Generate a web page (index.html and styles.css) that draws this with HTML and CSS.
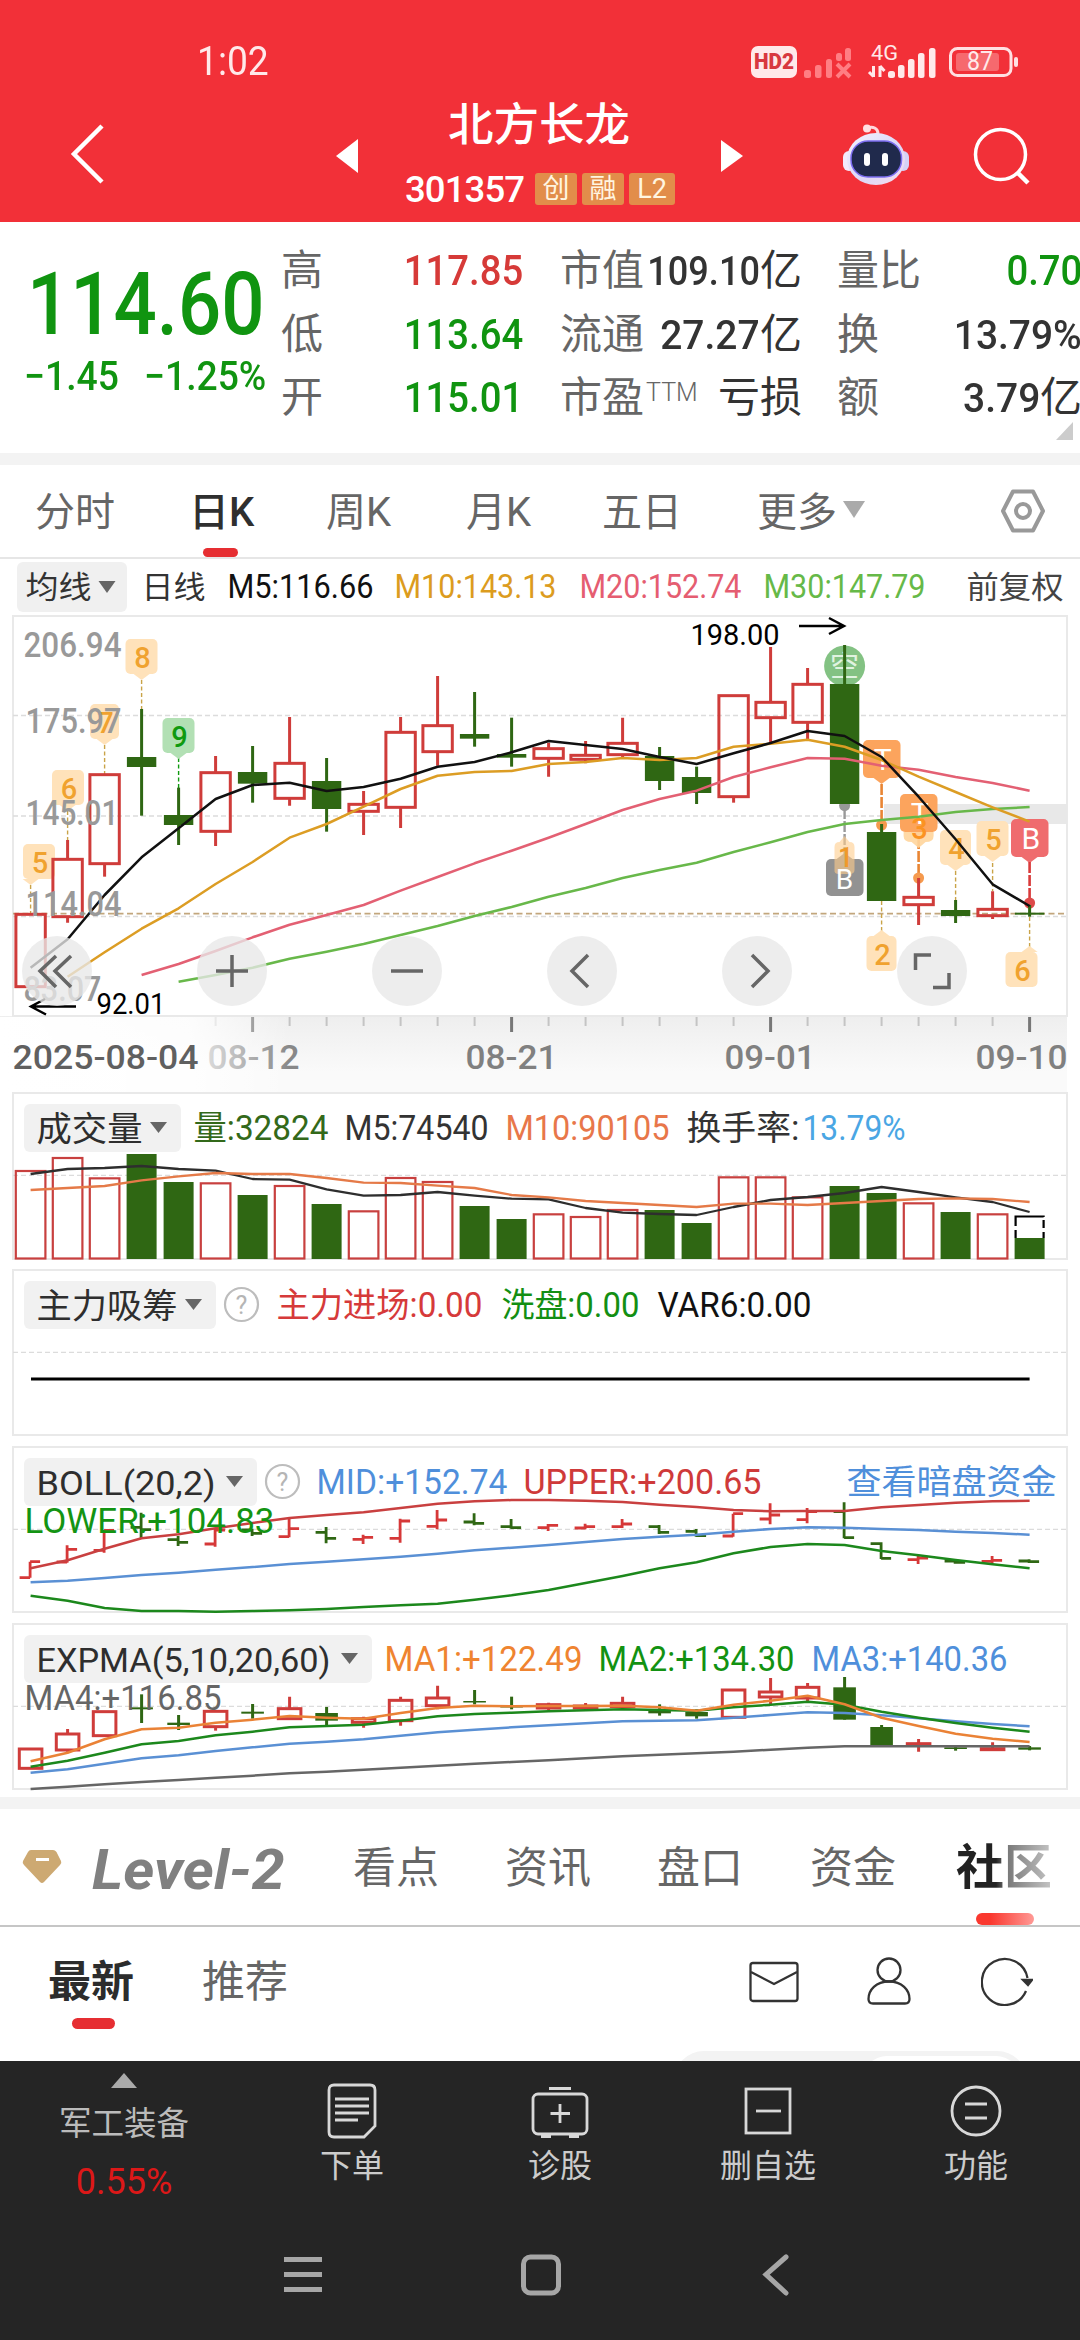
FILE: index.html
```html
<!DOCTYPE html>
<html lang="zh-CN">
<head>
<meta charset="utf-8">
<title>北方长龙 301357</title>
<link rel="stylesheet" href="styles.css">
</head>
<body>
<header class="top">
  <div class="status">
    <span class="clock">1:02</span>
    <svg class="status-icons" width="270" height="44" viewBox="0 -8 270 44">
      <rect x="0" y="2" width="46" height="32" rx="7" fill="#ffe9ea"/>
      <text x="3" y="25" class="hd" textLength="40" lengthAdjust="spacingAndGlyphs">HD2</text>
      <g fill="#ff7e83">
        <rect x="53" y="26" width="7" height="8" rx="2.5"/><rect x="64" y="21" width="6.500" height="13" rx="2.500"/>
        <rect x="75" y="15" width="6" height="19" rx="2.500"/><rect x="85" y="9" width="6" height="8" rx="2.500"/><rect x="94" y="4" width="6" height="13" rx="2.500"/>
      </g>
      <path d="M86 20 99 33M99 20 86 33" stroke="#ff7e83" stroke-width="4"/>
      <text x="120" y="16" class="net" textLength="27" lengthAdjust="spacingAndGlyphs">4G</text>
      <path d="M122.500 22v11M118 28l4.500 4.500M129 33V22M133.500 27 129 22" fill="none" stroke="#ffe9ea" stroke-width="3"/>
      <g fill="#ffe9ea">
        <rect x="137" y="27" width="7" height="7" rx="2.500"/><rect x="147" y="21" width="6.500" height="13" rx="2.500"/><rect x="157" y="15" width="6.500" height="19" rx="2.500"/>
        <rect x="167" y="9" width="6.500" height="25" rx="2.500"/><rect x="178" y="4" width="6.500" height="30" rx="2.500"/>
      </g>
      <rect x="199.500" y="4.500" width="60.500" height="27" rx="7" fill="none" stroke="#ffe0e2" stroke-width="3"/>
      <rect x="205" y="9" width="43" height="18" rx="3" fill="#f6696e"/>
      <rect x="263" y="13" width="4" height="10" rx="2" fill="#ffe0e2"/>
      <text x="216" y="26" class="bat" textLength="26" lengthAdjust="spacingAndGlyphs">87</text>
    </svg>
  </div>
  <div class="titlebar">
    <svg class="back" width="40" height="66" viewBox="0 0 40 66"><path d="M34 5 6 33 34 61" fill="none" stroke="#fff" stroke-width="4.500"/></svg>
    <svg class="prev" width="22" height="34" viewBox="0 0 22 34"><path d="M22 0v34L0 17z" fill="#fff"/></svg>
    <div class="stock">
      <h1>北方长龙</h1>
      <div class="code"><span>301357</span><i>创</i><i>融</i><i class="l2">L2</i></div>
    </div>
    <svg class="next" width="22" height="34" viewBox="0 0 22 34"><path d="M0 1v32l22-16z" fill="#fff"/></svg>
    <svg class="robot" width="68" height="64" viewBox="0 0 68 64">
      <defs>
        <linearGradient id="shell" x1="0" y1="0" x2="1" y2="1"><stop offset="0" stop-color="#f4f3ff"/><stop offset=".55" stop-color="#dcd8f8"/><stop offset="1" stop-color="#f8dcec"/></linearGradient>
      </defs>
      <path d="M25 5C31 3 36 5 36 11" fill="none" stroke="#ffd7dd" stroke-width="3"/><circle cx="25" cy="5.500" r="4" fill="#ffdfe3"/>
      <rect x="1" y="28" width="12" height="20" rx="6" fill="#f3eafc"/><rect x="55" y="28" width="12" height="20" rx="6" fill="#d5d2f5"/>
      <ellipse cx="34" cy="36" rx="29" ry="26" fill="url(#shell)"/>
      <rect x="9" y="18" width="50.500" height="36" rx="17" fill="#202a4c" stroke="#7c6df0" stroke-width="1.500"/>
      <rect x="22" y="30" width="6" height="13" rx="3" fill="#fff"/><rect x="40" y="30" width="6" height="13" rx="3" fill="#fff"/>
    </svg>
    <svg class="search" width="58" height="58" viewBox="0 0 58 58"><circle cx="27.500" cy="27.500" r="25" fill="none" stroke="#fff" stroke-width="3.500"/><path d="M44 45 55 56" stroke="#fff" stroke-width="4.500"/></svg>
  </div>
</header>

<section class="quote">
  <div class="price green">
    <div class="last"><b>114.60</b></div>
    <div class="chg"><span class="abs">−1.45</span><span class="pct">−1.25%</span></div>
  </div>
  <dl>
    <div><dt>高</dt><dd class="red"><span>117.85</span></dd></div>
    <div><dt>低</dt><dd class="green"><span>113.64</span></dd></div>
    <div><dt>开</dt><dd class="green"><span>115.01</span></dd></div>
  </dl>
  <dl class="mid">
    <div><dt>市值</dt><dd><span class="tight">109.10</span>亿</dd></div>
    <div><dt>流通</dt><dd><span>27.27</span>亿</dd></div>
    <div><dt>市盈<sup>TTM</sup></dt><dd>亏损</dd></div>
  </dl>
  <dl class="end">
    <div><dt>量比</dt><dd class="green"><span>0.70</span></dd></div>
    <div><dt>换</dt><dd><span>13.79%</span></dd></div>
    <div><dt>额</dt><dd><span>3.79</span>亿</dd></div>
  </dl>
  <i class="corner"></i>
</section>

<nav class="periods">
  <span>分时</span><span class="on">日K</span><span>周K</span><span>月K</span><span>五日</span><span class="more">更多<i></i></span>
  <svg width="46" height="44" viewBox="0 0 46 44"><path d="M13 2.500H33L43 22 33 41.500H13L3 22z" fill="none" stroke="#999" stroke-width="4" stroke-linejoin="round"/><circle cx="23" cy="22" r="7" fill="none" stroke="#999" stroke-width="4"/></svg>
</nav>

<section class="charts">
  <div class="kline">
    <svg id="kline" width="1080" height="533" viewBox="0 -41 1080 533"></svg>
    <div class="tools">
      <button><svg viewBox="0 0 70 70"><path d="M34 20 18 35 34 51M49 20 33 35 49 51"/></svg></button>
      <button><svg viewBox="0 0 70 70"><path d="M19 35H51M35 19V51"/></svg></button>
      <button><svg viewBox="0 0 70 70"><path d="M19 35H51"/></svg></button>
      <button><svg viewBox="0 0 70 70"><path d="M41 19 25 35 41 51"/></svg></button>
      <button><svg viewBox="0 0 70 70"><path d="M30 19 46 35 30 51"/></svg></button>
      <button><svg viewBox="0 0 70 70"><path d="M18.500 34V19H34M52 37V51.500H36"/></svg></button>
    </div>
  </div>
  <svg id="volume" width="1080" height="177" viewBox="0 12 1080 177"></svg>
  <svg id="inflow" width="1080" height="177" viewBox="0 189 1080 177"></svg>
  <svg id="boll" width="1080" height="177" viewBox="0 16 1080 177"></svg>
  <svg id="expma" width="1080" height="174" viewBox="0 193 1080 174"></svg>
</section>

<nav class="sections">
  <svg width="40" height="36" viewBox="0 0 40 36"><path d="M9 1H31Q33 1 34.500 3L39 12Q40 14 38 16L22 33Q20 35 18 33L2 16Q0 14 1 12L6 3Q7 1 9 1z" fill="#cda972"/><path d="M14 10.500H27" stroke="#fff" stroke-width="3"/></svg>
  <span class="level"><b>Level-2</b></span>
  <span>看点</span><span>资讯</span><span>盘口</span><span>资金</span><span class="on">社区</span>
</nav>

<section class="feed">
  <span class="on">最新</span><span>推荐</span>
  <svg class="mail" width="50" height="42" viewBox="0 0 50 42"><rect x="1.500" y="2" width="47" height="38" rx="2.500"/><path d="M2 11 25 23 48 11"/></svg>
  <svg class="user" width="46" height="50" viewBox="0 0 46 50"><circle cx="23" cy="14" r="11.500"/><path d="M23 25.500C10 25.500 2.500 34 2.500 43Q2.500 47.500 7 47.500H39Q43.500 47.500 43.500 43C43.500 34 36 25.500 23 25.500z"/></svg>
  <svg class="reload" width="52" height="50" viewBox="0 0 52 50"><path d="M45 35A23 23 0 1 1 46.500 22"/><path d="M42 24h9l-4 5z" fill="#333"/></svg>
  <div class="sorter"><i></i></div>
</section>

<footer>
  <div class="tabbar">
    <div class="index"><i></i><span>军工装备</span><em>0.55%</em></div>
    <div><svg width="60" height="58" viewBox="0 0 60 58"><path d="M12 3H48Q53 3 53 8V44L42 55H12Q7 55 7 50V8Q7 3 12 3z"/><path d="M13 17H47M13 24H47M13 31H47M13 38H36"/></svg><span>下单</span></div>
    <div><svg width="60" height="58" viewBox="0 0 60 58"><rect x="3" y="12" width="54" height="40" rx="5"/><path d="M19 6.500H41M30 22V41M20.500 31.500H40"/><path d="M11 54H21M39 54H49" stroke-width="4"/></svg><span>诊股</span></div>
    <div><svg width="60" height="58" viewBox="0 0 60 58"><rect x="8" y="7" width="44" height="44"/><path d="M18 29H43"/></svg><span>删自选</span></div>
    <div><svg width="60" height="58" viewBox="0 0 60 58"><circle cx="30" cy="29" r="24"/><path d="M19 22H41M19 36H41"/></svg><span>功能</span></div>
  </div>
  <div class="sysnav">
    <svg width="40" height="42" viewBox="0 0 40 42"><path d="M1 5.500H39M1 20.500H39M1 35.500H39" stroke-linecap="butt"/></svg>
    <svg width="40" height="42" viewBox="0 0 40 42"><rect x="2.500" y="3" width="35" height="36" rx="7"/></svg>
    <svg width="40" height="42" viewBox="0 0 40 42"><path d="M28 3 8 20.500 28 39"/></svg>
  </div>
</footer>
<script src="charts.js"></script>
</body>
</html>
```
FILE: styles.css
```css
* { box-sizing: border-box; }
body { margin: 0; width: 1080px; height: 2340px; overflow: hidden; background: #fff; color: #333;
  font-family: Roboto, "Noto Sans CJK SC", sans-serif; }
svg { display: block; flex: none; }
i, em { font-style: normal; }
.red { color: #d63a38; }
.green { color: #109410; }

.top { height: 222px; background: #f23038; color: #fff; }
.status { height: 80px; padding: 36px 59px 0 197px; display: flex; justify-content: space-between; align-items: flex-start; }
.clock { margin-top: 8px; font-size: 40px; line-height: 36px; color: #ffe9ea; transform: scaleX(.93); transform-origin: left; }
.hd { font: 900 22px Roboto; fill: #d8383f; }
.net { font: 400 21px Roboto; fill: #ffe9ea; }
.bat { font: 400 25px Roboto; fill: #ffe9ea; }
.titlebar { height: 142px; padding-left: 68px; display: flex; align-items: flex-start; }
.back { margin-top: 41px; }
.prev { margin: 59px 0 0 228px; }
.stock { width: 340px; margin-left: 22px; padding-left: 25px; }
.stock h1 { margin: 21px 0 0 43px; font-size: 45.500px; line-height: 50px; font-weight: 500; }
.code { display: flex; align-items: center; gap: 5px; margin-top: 20px; height: 36px; }
.code span { width: 125px; font-size: 36.500px; font-weight: 500; letter-spacing: -.9px; }
.code i { width: 42px; height: 32px; border-radius: 3px; background: #e28d4a; color: #fff5e0; font-size: 27px; line-height: 32px; text-align: center; }
.code .l2 { width: 46px; }
.next { margin: 59px 0 0 1px; }
.robot { margin: 43px 0 0 99px; }
.search { margin: 47px 0 0 63px; }

.quote { position: relative; height: 231px; display: grid; grid-template-columns: 281px 242px 240px 242px; column-gap: 0; }
.price { padding-top: 38px; }
.last { height: 86px; padding-left: 27px; }
.last b { display: inline-block; font-size: 87px; line-height: 88px; font-weight: 500; transform: scaleX(.875); transform-origin: left; }
.chg { display: flex; font-size: 40.500px; line-height: 60px; font-weight: 500; }
.chg span { display: block; transform: scaleX(.92); transform-origin: left; }
.abs { width: 120px; margin-left: 24px; }
dl { margin: 0; padding-top: 17px; font-size: 42px; }
dl div { display: flex; justify-content: space-between; height: 63.500px; line-height: 63px; white-space: nowrap; }
dt { color: #666; }
dt sup { font-size: 25px; line-height: 20px; vertical-align: 11px; font-weight: 300; margin-left: 2px; }
dd { margin: 0; font-weight: 500; }
dd span { display: inline-block; font-size: 43px; font-weight: 500; transform: scaleX(.89); transform-origin: right; }
.mid { margin-left: 37px; width: 242px; }
.end { margin-left: 74px; width: 245px; }
.mid dd, .end dd { font-weight: 400; }
.mid dd span, .end dd span { font-size: 41px; transform: scaleX(.95); }
.mid dd .tight { margin-left: -20px; transform: scaleX(.88); }
.end .green span { font-size: 43px; transform: scaleX(.89); }
.corner { position: absolute; right: 7px; bottom: 13px; border: solid transparent; border-width: 0 0 18px 17px; border-bottom-color: #ccc; }

.periods { height: 106px; border-top: 12px solid #f3f3f3; border-bottom: 2px solid #e6e6e6; display: grid;
  grid-template-columns: 154px 137px 140px 136px 155px 243px 46px; padding-left: 35px; align-items: center; color: #666; font-size: 40px; line-height: 95px; }
.periods span { position: relative; height: 92px; }
.periods .on { color: #2f2f2f; font-weight: 500; }
.periods .on::after { content: ""; position: absolute; left: 14px; bottom: 0; width: 35px; height: 9px; border-radius: 5px; background: #e62e32; }
.more i { display: inline-block; vertical-align: 8px; margin-left: 6px; border: solid transparent; border-width: 17px 11px 0; border-top-color: #aaa; }

.kline { position: relative; height: 533px; }
.tools { position: absolute; left: 22px; top: 377px; width: 945px; display: flex; justify-content: space-between; }
.tools button { width: 70px; height: 70px; padding: 0; border: 0; border-radius: 50%; background: rgba(232,232,232,.78); }
.tools path { fill: none; stroke: #666; stroke-width: 3.500; }
#kline, #volume, #inflow, #boll, #expma { font-family: Roboto, "Noto Sans CJK SC", sans-serif; }

.sections { height: 130px; border-top: 12px solid #f3f3f3; border-bottom: 2px solid #c6c6c6; display: grid; padding-left: 22px;
  grid-template-columns: 70px 261px 152px 152px 153px 146px 100px; align-items: center; font-size: 43px; line-height: 119px; color: #666; }
.sections span { height: 116px; }
.level b { display: inline-block; font: italic 700 56px/122px Roboto; color: #808080; transform: scaleX(1.06); transform-origin: left; }
.sections .on { position: relative; font-size: 48px; font-weight: 700; line-height: 117px;
  background: linear-gradient(90deg, #222 40%, #777 50%, #ccc 100%); -webkit-background-clip: text; background-clip: text; color: transparent; }
.sections .on::after { content: ""; position: absolute; left: 20px; bottom: 0; width: 58px; height: 12px; border-radius: 6px; background: linear-gradient(90deg, #fa382f 25%, #ff9a96); }

.feed { position: relative; height: 134px; overflow: hidden; display: flex; padding-left: 48px; font-size: 43px; line-height: 110px; color: #666; }
.feed > span { position: relative; width: 154px; }
.feed .on { color: #2c2c2c; font-weight: 700; }
.feed .on::after { content: ""; position: absolute; left: 24px; top: 91px; width: 43px; height: 11px; border-radius: 6px; background: #e62e32; }
.feed svg { fill: none; stroke: #333; stroke-width: 2.300; }
.mail { margin: 34px 0 0 393px; }
.user { margin: 29px 0 0 67px; }
.reload { margin: 29px 0 0 69px; }
.sorter { position: absolute; left: 674px; top: 124px; width: 353px; height: 60px; border-radius: 30px; background: #f3f3f3; padding: 5px 6px; }
.sorter i { display: block; margin-left: 182px; height: 50px; border-radius: 25px; background: #fff; }

footer { height: 279px; background: #252525; }
.tabbar { height: 150px; display: grid; grid-template-columns: 248px 208px 208px 208px 208px; color: #ccc; font-size: 32px; }
.tabbar div { display: flex; flex-direction: column; align-items: center; padding-top: 21px; line-height: 50px; }
.tabbar div span { margin-top: 1px; }
.tabbar svg { fill: none; stroke: #d8d8d8; stroke-width: 2.800; }
.tabbar .index { padding-top: 12px; color: #bbb; }
.index i { border: solid transparent; border-width: 0 13px 15px; border-bottom-color: #aaa; }
.tabbar .index span { margin-top: 11px; font-size: 32.500px; }
.index em { margin-top: 8px; font-size: 36px; color: #dc1818; }
.sysnav { height: 86px; margin: 43px 0 0 283px; width: 515px; display: flex; justify-content: space-between; }
.sysnav svg { fill: none; stroke: #a6a6a6; stroke-width: 5; stroke-linecap: round; }
```
FILE: charts.js
```js
// Series values are stored in chart units: 3 units to one CSS pixel.
const STEP = 37, X0 = 30.6, X = i => X0 + STEP * i;
const RED = '#cf3c3a', GREEN = '#2f6713';

function el(parent, name, attrs, text) {
  const n = document.createElementNS('http://www.w3.org/2000/svg', name);
  for (const k in attrs) n.setAttribute(k, attrs[k]);
  if (text) n.textContent = text;
  parent.appendChild(n);
  return n;
}
const svg = id => document.getElementById(id);
const rect = (s, x, y, w, h, fill, o = {}) => el(s, 'rect', { x, y, width: w, height: h, fill, ...o });
const path = (s, d, stroke, w = 2.5, o = {}) => el(s, 'path', { d, fill: 'none', stroke, 'stroke-width': w, ...o });
const label = (s, x1, x2, y, str, size, fill, weight = 400, o = {}) =>
  el(s, 'text', { x: x1 - 1.5, y, textLength: x2 - x1 + 4, lengthAdjust: 'spacingAndGlyphs', 'font-size': size, fill, 'font-weight': weight, ...o }, str);
const series = (s, from, vals, color, w = 2.5) =>
  path(s, 'M' + vals.map((v, k) => X(from + k).toFixed(1) + ' ' + (v / 3).toFixed(1)).join('L'), color, w, { 'stroke-linejoin': 'round' });
function candles(s, list, half) {
  list.forEach(([up, hi, top, bot, lo], i) => {
    const x = X(i), [h, t, b, l] = [hi, top, bot, lo].map(v => v / 3);
    if (up) {
      path(s, `M${x} ${h}V${t}M${x} ${b}V${l}`, RED, 3);
      rect(s, x - half + .5, t, half * 2 - 1, Math.max(b - t, 1), 'none', { stroke: RED, 'stroke-width': 3 });
    } else {
      path(s, `M${x} ${h}V${l}`, GREEN, 3);
      rect(s, x - half + .5, t, half * 2 - 1, Math.max(b - t, 1.5), GREEN);
    }
  });
}
function frame(s, top, bottom, grids) {
  rect(s, 13, top, 1054, bottom - top, 'none', { stroke: '#e9e9e9', 'stroke-width': 2 });
  grids.forEach(y => path(s, `M13 ${y}H1067`, '#dcdcdc', 1.3, { 'stroke-dasharray': '5 3' }));
}
function pill(s, y, w, str, textEnd) {
  rect(s, 24, y, w, 48, '#f1f1f1', { rx: 6 });
  const tx = 24 + w - 31;
  label(s, 38, textEnd, y + 36.5, str, 34, '#2e2e2e');
  path(s, `M${tx} ${y + 18}h17l-8.500 11z`, 'none', 0, { style: 'fill:#666' });
}
function help(s, cx, cy) {
  el(s, 'circle', { cx, cy, r: 16.5, fill: 'none', stroke: '#bdbdbd', 'stroke-width': 2.2 });
  el(s, 'text', { x: cx, y: cy + 9, 'text-anchor': 'middle', 'font-size': 25, fill: '#b5b5b5' }, '?');
}
function tag(s, x, y, w, h, px, dir, fill, str, color, size = 29) {
  rect(s, x, y, w, h, fill, { rx: 5 });
  const e = dir > 0 ? y + h : y;
  path(s, `M${px - 8} ${e}h16l-8 ${dir * 6}z`, 'none', 0, { style: `fill:${fill}` });
  el(s, 'text', { x: x + w / 2 + 1, y: y + h / 2 + size * .38, 'text-anchor': 'middle', 'font-size': size, 'font-weight': size > 29 ? 400 : 500, fill: color }, str);
}

// ---- daily candles
{
  const s = svg('kline');
  rect(s, 17, -38, 110, 50, '#f0f0f0', { rx: 6 });
  label(s, 27, 89, -2, '均线', 31, '#333');
  path(s, 'M98.500-19h17l-8.500 12z', 'none', 0, { style: 'fill:#666' });
  label(s, 143, 203, -2, '日线', 31, '#333');
  label(s, 229, 371, -2, 'M5:116.66', 32.5, '#111');
  label(s, 396, 554, -2, 'M10:143.13', 32.5, '#dc9c1e');
  label(s, 581, 739, -2, 'M20:152.74', 32.5, '#e55d71');
  label(s, 765, 923, -2, 'M30:147.79', 32.5, '#66b948');
  label(s, 968, 1061, -2, '前复权', 31, '#444');

  const d = el(s, 'defs', {});
  const g1 = el(d, 'linearGradient', { id: 'axisbg', x1: 0, y1: 0, x2: 0, y2: 1 });
  el(g1, 'stop', { offset: 0, 'stop-color': '#eeeeee' }); el(g1, 'stop', { offset: .7, 'stop-color': '#fafafa' });
  const g2 = el(d, 'linearGradient', { id: 'axisfade' });
  el(g2, 'stop', { offset: 0, 'stop-color': '#fff', 'stop-opacity': 1 }); el(g2, 'stop', { offset: .65, 'stop-color': '#fff', 'stop-opacity': .85 });
  el(g2, 'stop', { offset: 1, 'stop-color': '#fff', 'stop-opacity': 0 });
  rect(s, 0, 416, 1067, 80, 'url(#axisbg)');
  for (let i = 5; i < 28; i++) {
    const major = (i - 6) % 7 === 0;
    path(s, `M${X(i)} 417V${major ? 432 : 426}`, major ? '#777' : '#c4c4c4', major ? 3 : 2);
  }
  label(s, 209, 297, 469, '08-12', 34, '#888', 500);
  label(s, 467, 555, 469, '08-21', 34, '#808080', 500);
  label(s, 726, 813, 469, '09-01', 34, '#808080', 500);
  label(s, 977, 1065, 469, '09-10', 34, '#808080', 500);
  rect(s, 0, 417, 290, 80, 'url(#axisfade)');
  label(s, 14, 196, 469, '2025-08-04', 34, '#606060', 500);

  frame(s, 16, 416, [115.5, 216, 316.5]);
  rect(s, 884, 204, 183, 20, '#e8e8e8');
  path(s, 'M13 313.700H1067', '#c2a67c', 1.8, { 'stroke-dasharray': '6 3.5' });

  const dash = (x, y1, y2, c = '#c9a348', w = 1.4) => path(s, `M${x} ${y1}V${y2}`, c, w, { 'stroke-dasharray': w > 2 ? '11 2' : '4 2.5' });
  const O = '#ffe2ba', OT = '#f0a22f';
  dash(X(0), 285, 313); dash(X(1), 211, 240); dash(X(2), 145, 174); dash(X(3), 80, 109);
  dash(X(4), 158, 188, '#109a10');
  dash(X(23), 301, 331); dash(X(25), 271, 300); dash(X(26), 263, 291); dash(X(27), 317, 347);
  tag(s, 23, 244, 32, 35, 30.6, 1, O, '5', OT);
  tag(s, 52, 170, 32, 35, X(1), 1, O, '6', OT);
  tag(s, 90, 104, 29, 35, X(2), 1, O, '7', OT);
  tag(s, 125.5, 39, 32, 35, X(3), 1, O, '8', OT);
  tag(s, 162.5, 118, 32, 35, X(4), 1, '#b2e0b4', '9', '#0f9a0f');
  el(s, 'circle', { cx: X(22), cy: 66, r: 20.5, fill: '#83c283' });
  el(s, 'text', { x: X(22), y: 77, 'text-anchor': 'middle', 'font-size': 29, fill: '#e0f3e0' }, '空');
  tag(s, 863, 140, 37.500, 38, X(23), 1, '#fca45d', 'T', '#fff', 30);
  tag(s, 900, 194, 37.500, 38, X(24), 1, '#fca45d', 'T', '#fff', 30);
  dash(X(23), 184, 222, '#e98534', 2.6); dash(X(24), 238, 276, '#e98534', 2.6);
  el(s, 'circle', { cx: X(23), cy: 225, r: 5.5, fill: '#f59a4e' });
  el(s, 'circle', { cx: X(24), cy: 278, r: 5.5, fill: '#f59a4e' });
  path(s, `M${X(24) - 15} 232h30v4q0 6-8 6l-7 6-7-6q-8 0-8-6z`, 'none', 0, { style: 'fill:#ffd59c;opacity:.9' });
  el(s, 'text', { x: X(24) + 1, y: 239, 'text-anchor': 'middle', 'font-size': 29, 'font-weight': 500, fill: '#fb9322' }, '3');
  tag(s, 940, 230, 31, 35, X(25), 1, O, '4', OT);
  tag(s, 976.500, 221, 32, 35, X(26), 1, O, '5', OT);
  tag(s, 1011, 219, 37.500, 38, X(27), 1, '#ef6c6e', 'B', '#fff', 30);
  dash(X(27), 262, 300, '#d93b3b', 2.6);
  el(s, 'circle', { cx: X(27), cy: 303, r: 5.5, fill: '#dd4a4a' });
  el(s, 'circle', { cx: X(22), cy: 205.500, r: 5.5, fill: '#999' });
  dash(X(22), 208, 254, '#999', 2.4);
  tag(s, 826, 259, 37.500, 37, X(22), -1, '#929292', '', '#fff', 30);
  path(s, 'M834.500 270V247q0-5 5-5l5-6 5 6q5 0 5 5V270q0 4-5 4H839q-5 0-4.500-4z', 'none', 0, { style: 'fill:#ffcd8c;opacity:.6' });
  el(s, 'text', { x: X(22) + 1, y: 267, 'text-anchor': 'middle', 'font-size': 27, 'font-weight': 500, fill: '#f09a2a' }, '1');
  el(s, 'text', { x: X(22), y: 289, 'text-anchor': 'middle', 'font-size': 28, fill: '#fff' }, 'B');
  tag(s, 866.500, 336, 30, 35, X(23), -1, O, '2', OT);
  tag(s, 1005.500, 352, 32, 35, X(27), -1, O, '6', OT);

  candles(s, [
    [1,941,943,1160,1160],[1,720,778,950,968],[1,524,524,791,830],[0,327,471,501,647],[0,563,645,675,735],
    [1,468,518,694,738],[0,438,516,551,608],[1,351,490,595,617],[0,474,543,627,695],[1,573,613,634,705],
    [1,351,397,622,684],[1,228,377,455,497],[0,276,402,416,440],[0,353,462,473,500],[1,428,446,475,530],
    [1,423,466,478,490],[1,353,430,464,472],[0,441,468,543,570],[0,500,531,579,612],[1,287,287,590,608],
    [1,141,307,353,430],[1,204,253,367,420],[0,135,252,612,612],[0,672,696,903,903],[1,834,892,914,975],
    [0,900,930,948,969],[1,874,928,947,957],[0,915,938,944,950]], 15.2);
  series(s, 4, [1145,1125,1103,1076,1055,1032,1005,978,948,921,890,864,834,810,788,756,727,696,672,660,650,636,627,621], '#68b84a');
  series(s, 3, [1125,1092,1053,1012,974,945,915,872,831,790,752,713,672,630,597,572,531,502,474,476,497,509,531,549,572], '#e36073');
  series(s, 1, [1130,1057,986,925,852,786,713,672,620,567,527,516,513,492,486,474,480,474,440,431,419,440,480,530,576,622,665], '#dc9d24');
  series(s, 0, [1103,1018,885,772,685,597,555,548,573,561,536,500,486,457,423,435,447,471,492,460,429,393,408,471,590,718,853,918], '#111');

  label(s, 25, 119, 57, '206.94', 34.500, '#999', 500);
  label(s, 27, 119, 133, '175.97', 34.500, '#999', 500);
  label(s, 27, 116, 225, '145.01', 34.500, '#999', 500);
  label(s, 27, 119, 316, '114.04', 34.500, '#999', 500);
  label(s, 25, 99, 401, '83.07', 34.500, '#999', 500);
  label(s, 98, 163, 414, '92.01', 29.500, '#000');
  path(s, 'M76 406.500H31M45 399 31 406.500 46 414.500', '#000', 2.5);
  label(s, 692, 777, 45, '198.00', 29.500, '#000');
  path(s, 'M799 26H844M829 18 844 26 829 34', '#000', 2.5);
}

// ---- volume
{
  const s = svg('volume');
  frame(s, 13, 179, [95.3]);
  pill(s, 24, 157, '成交量', 140);
  label(s, 195, 326, 60, '量:32824', 34.500, '#33691a');
  label(s, 346, 486, 60, 'M5:74540', 34.500, '#333');
  label(s, 507, 667, 60, 'M10:90105', 34.500, '#e8774a');
  label(s, 688, 797, 60, '换手率:', 34.500, '#333');
  label(s, 804, 903, 60, '13.79%', 34.500, '#4aa6e4');
  [[1,273],[1,234],[1,295],[0,222],[0,306],[1,310],[0,345],[1,318],[0,372],[1,394],[1,294],[1,306],[0,378],[0,417],
   [1,403],[1,411],[1,390],[0,390],[0,429],[1,292],[1,292],[1,352],[0,318],[0,339],[1,370],[0,396],[1,403],[0,474]]
    .forEach(([up, v], i) => up
      ? rect(s, X(i) - 14.800, v / 3, 29.600, 178.500 - v / 3, 'none', { stroke: '#c8403f', 'stroke-width': 2.2 })
      : rect(s, X(i) - 15, v / 3, 30, 179 - v / 3, GREEN));
  path(s, `M${X(27) - 14} 158V136.500H${X(27) + 14}V158`, '#000', 2.2, { 'stroke-dasharray': '8 4 9 0 29 3 8 4' });
  series(s, 0, [282,267,264,258,267,272,297,299,328,347,345,336,347,356,358,384,398,402,405,381,360,351,339,321,336,352,366,396], '#2e2e2e', 2.3);
  series(s, 0, [330,324,318,301,289,279,282,282,294,308,309,317,324,345,352,363,369,375,381,371,371,375,369,363,357,355,357,366], '#e57a48', 2.3);
}

// ---- main force inflow
{
  const s = svg('inflow');
  frame(s, 190, 355, [272.300]);
  pill(s, 201, 192, '主力吸筹', 175);
  help(s, 241.500, 224.500);
  label(s, 278, 480, 237, '主力进场:0.00', 34.500, '#d63a3a');
  label(s, 503, 637, 237, '洗盘:0.00', 34.500, '#138f13');
  label(s, 659, 809, 237, 'VAR6:0.00', 34.500, '#111');
  path(s, `M31 299H${X(27)}`, '#000', 3);
}

// ---- BOLL
{
  const s = svg('boll');
  frame(s, 17, 182, [99.400]);
  [[1,395,443,443,395],[1,346,398,396,358],[1,300,368,361,301],[0,248,325,292,299],[0,318,348,329,337],[1,297,350,342,300],
   [0,296,318,300,310],[1,264,322,320,296],[0,291,340,307,325],[1,314,342,328,322],[1,266,338,325,273],[1,240,298,289,270],
   [0,250,286,276,280],[0,267,296,290,293],[1,282,303,293,286],[1,281,298,294,290],[1,267,294,290,282],[0,285,312,290,307],
   [0,297,320,304,317],[1,251,320,318,251],[1,220,283,267,255],[1,234,280,269,245],[0,217,325,245,323],[0,337,387,341,385],
   [1,377,402,389,384],[0,387,401,393,397],[1,378,400,394,391],[0,388,399,393,395]]
    .forEach(([up, hi, lo, o, c], i) =>
      path(s, `M${X(i) - .500} ${hi / 3}V${lo / 3}M${X(i) - 11} ${o / 3}h10.500M${X(i) - .500} ${c / 3}h10`, up ? '#d63838' : GREEN, 2.8));
  series(s, 0, [415,391,356,325,313,295,279,264,255,247,234,221,214,210,210,212,216,224,231,240,244,243,243,232,225,218,214,212], '#c94040');
  series(s, 0, [457,452,444,435,428,419,411,402,395,388,380,371,361,353,345,336,327,320,314,305,297,292,293,297,300,305,309,314], '#5a90d4');
  series(s, 0, [497,512,534,543,543,545,543,541,537,531,526,521,509,496,480,459,438,415,397,370,351,342,345,363,376,390,403,415], '#1c881c');
  pill(s, 28, 233, 'BOLL(20,2)', 213);
  help(s, 282.500, 51.500);
  label(s, 318, 505, 64, 'MID:+152.74', 34.500, '#4f8fdb');
  label(s, 525, 759, 64, 'UPPER:+200.65', 34.500, '#cf3a3a');
  label(s, 848, 1054, 64, '查看暗盘资金', 34.500, '#4f8fdb');
  label(s, 26, 272, 103, 'LOWER:+104.83', 34.500, '#139413');
}

// ---- EXPMA
{
  const s = svg('expma');
  frame(s, 194, 359, [276.400]);
  candles(s, [
    [1,957,957,1015,1015],[1,897,912,960,965],[1,845,845,917,917],[0,793,832,838,879],[0,855,878,885,900],
    [1,844,844,890,902],[0,822,845,851,866],[1,800,836,866,870],[0,831,849,872,885],[1,860,866,877,893],
    [1,800,811,872,887],[1,767,804,827,838],[0,780,813,817,823],[0,800,828,831,838],[1,818,824,834,840],
    [1,819,828,834,838],[1,800,820,830,834],[0,823,840,850,857],[0,838,846,859,866],[1,780,780,862,865],
    [1,744,786,801,822],[1,759,772,804,815],[0,741,772,869,869],[0,885,891,946,946],[1,927,941,944,965],
    [0,945,952,957,962],[1,937,956,959,962],[0,948,952,959,961]], 11.8);
  series(s, 0, [1077,1070,1063,1056,1050,1043,1037,1030,1025,1019,1013,1007,1001,996,991,985,979,974,970,965,959,953,949,949,949,949,949,949], '#666');
  series(s, 0, [1028,1018,1001,985,976,963,952,941,935,928,917,907,899,892,886,880,874,872,871,863,855,847,849,856,865,874,882,889], '#5a90d4');
  series(s, 0, [1010,992,968,943,933,916,905,892,888,884,872,859,852,848,844,841,838,840,842,832,824,815,824,845,863,879,893,905], '#1c881c');
  series(s, 0, [994,968,928,898,893,878,869,858,863,866,849,834,827,829,828,828,827,832,842,824,812,797,823,863,888,911,926,936], '#ea8236');
  pill(s, 205, 348, 'EXPMA(5,10,20,60)', 328);
  label(s, 386, 580, 241, 'MA1:+122.49', 34.500, '#ef8430');
  label(s, 600, 792, 241, 'MA2:+134.30', 34.500, '#129212');
  label(s, 813, 1005, 241, 'MA3:+140.36', 34.500, '#4f8fdb');
  label(s, 26, 219, 280, 'MA4:+116.85', 34.500, '#666');
}
```
